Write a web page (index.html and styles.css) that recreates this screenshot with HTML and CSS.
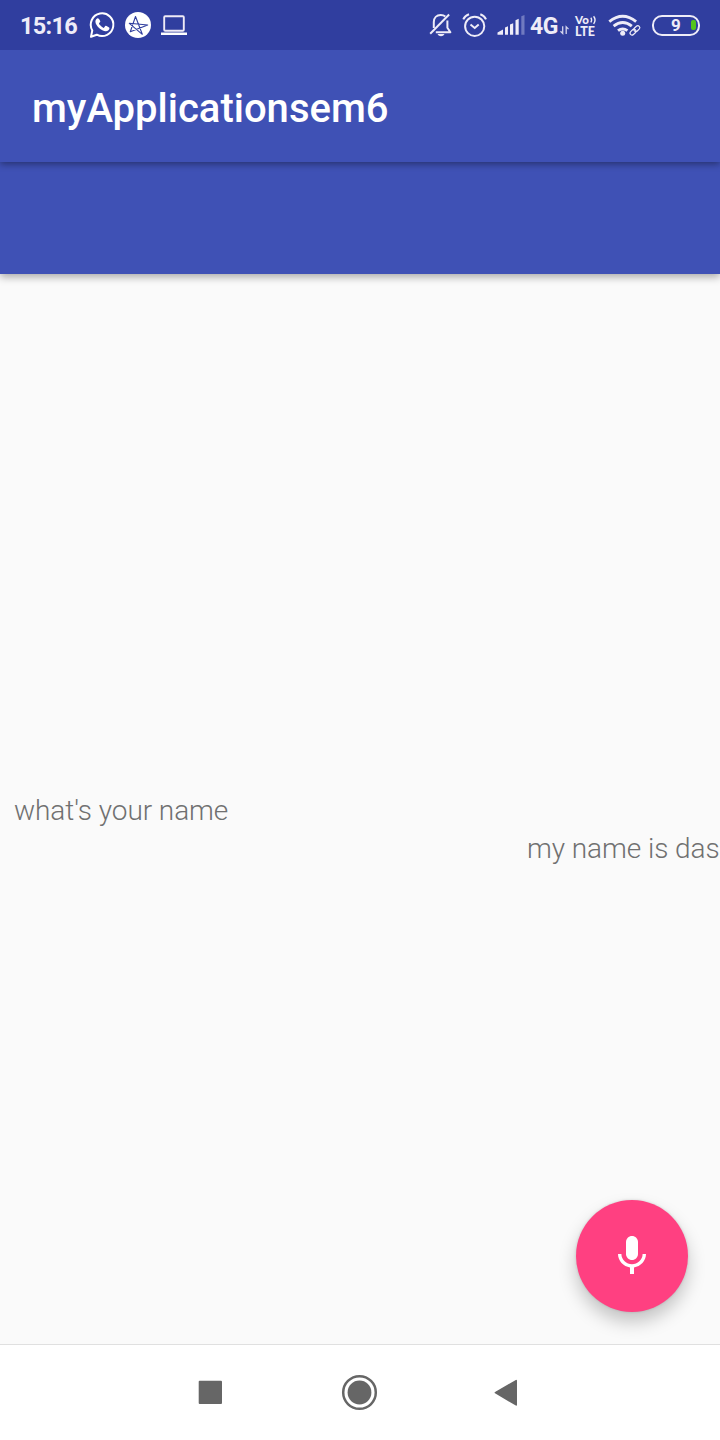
FILE: index.html
```html
<!DOCTYPE html>
<html lang="en">
<head>
<meta charset="utf-8">
<title>myApplicationsem6</title>
<link rel="stylesheet" href="styles.css">
</head>
<body>
<div class="screen">
  <header class="status">
    <div class="status-group">
      <span class="time">15:16</span>
      <svg class="icon" width="28" height="50" viewBox="88 0 28 50">
        <path d="M91 36.800l1.300-6.400a11.300 11.300 0 1 1 4.500 4.300z" fill="none" stroke="#fff" stroke-width="2" stroke-linejoin="round"/>
        <path d="M97.800 18.200c-.9 0-2.400 1.300-2.400 3.400 0 4.400 6.300 9.700 10.400 9.700 2.100 0 3.700-1.600 3.700-3.200 0-.5-3.300-2.300-3.800-2.300-.6 0-1.400 2.100-2 2.100-1 0-4.700-3.200-4.700-4.300 0-.5 1.300-1.400 1.300-2 0-.6-1.200-3.400-2.500-3.400z" fill="#fff"/>
      </svg>
      <svg class="icon" width="28" height="50" viewBox="124 0 28 50">
        <circle cx="138" cy="25" r="13" fill="#fff"/>
        <path d="M135.500 16.500L142.300 34.300 129.300 23.300 147.700 25 130.300 31.800z" fill="none" stroke="#303e9f" stroke-width="1.100" stroke-linejoin="round"/>
      </svg>
      <svg class="icon" width="28" height="50" viewBox="160 0 28 50">
        <rect x="164.200" y="16.200" width="19.600" height="14.600" rx="1" fill="none" stroke="#eeeaf6" stroke-width="1.900"/>
        <path d="M161 32.500h26v2.500h-26z" fill="#fff"/>
      </svg>
    </div>
    <div class="status-group">
      <svg class="icon" width="24" height="50" viewBox="429 0 24 50">
        <g fill="none" stroke="#eeecf8" stroke-width="2" stroke-linejoin="round">
          <path d="M433.800 28v-6c0-4.400 2.900-7 6.900-7 1.900 0 3.500.6 4.600 1.600M447.400 20.500v7.300l3 4.400h-14.600"/>
          <path d="M430.200 33.700l18.900-19.200"/>
        </g>
        <path d="M437.500 34h7c-.8 1.500-2 2.200-3.500 2.200s-2.700-.7-3.500-2.200z" fill="#eeecf8"/>
      </svg>
      <svg class="icon" width="25" height="50" viewBox="462 0 25 50">
        <g fill="none" stroke="#eeecf8" stroke-width="2">
          <circle cx="474.700" cy="26.300" r="9.600"/>
          <path d="M470.500 24.500l4.200 3.500 4-3.500M463.300 19.400c1-2.300 3-4.200 5.700-5.200M486 19.400c-1-2.300-3-4.200-5.700-5.200"/>
        </g>
      </svg>
      <svg class="icon" width="28" height="50" viewBox="497 0 28 50">
        <path d="M497.500 32.500l5.500-3v5.200h-5.500zM505 27.500l3-1.200v8.400h-3zM510 24.500l3.200-1.300v11.500h-3.200zM515.500 20.200l3.200-1.500v16h-3.200z" fill="#eeecf8"/>
        <path d="M521.300 16.300l3.200-1.300v19.700h-3.200z" fill="#707ac0"/>
      </svg>
      <span class="network">4G</span>
      <svg class="icon" width="11" height="50" viewBox="559 0 11 50">
        <path d="M562.700 26.300v7.200l-2.200-2.300M566.200 34v-7.200l2.300 2.300" fill="none" stroke="#d5d5ee" stroke-width="1.300"/>
      </svg>
      <span class="volte"><span class="volte-top">Vo<svg width="7" height="12" viewBox="0 0 7 12"><path d="M.8 3.800q1.600 2 0 4.600M3.600 2.300q2.900 3.700 0 7.600" fill="none" stroke="#eeecf8" stroke-width="1.400"/></svg></span><span class="volte-low">LTE</span></span>
      <svg class="icon" width="34" height="50" viewBox="608 0 34 50">
        <g fill="none" stroke="#eeecf8" stroke-width="2.900">
          <path d="M609.300 21.600q13.400-10.600 26.800 0M613.600 26.200q9.100-7.200 18.200 0M618 30.700q4.700-3.600 9.400 0"/>
        </g>
        <circle cx="622.700" cy="33.300" r="2.500" fill="#eeecf8"/>
        <g transform="rotate(-43 635 30.300)" fill="none">
          <rect x="629.200" y="28.400" width="11.500" height="3.800" rx="1.900" stroke="#303e9f" stroke-width="3"/>
          <g stroke="#eeecf8" stroke-width="1.200"><rect x="629" y="28.300" width="6.600" height="4" rx="2"/><rect x="634.200" y="28.300" width="6.600" height="4" rx="2"/></g>
        </g>
      </svg>
      <span class="battery"><span class="battery-text">9</span><span class="battery-level"></span></span>
    </div>
  </header>
  <div class="toolbar"><h1 class="title">myApplicationsem6</h1></div>
  <div class="subbar"></div>
  <main class="chat">
    <p class="msg msg-in">what's your name</p>
    <p class="msg msg-out">my name is das</p>
    <button class="fab" aria-label="Speak">
      <svg width="48" height="48" viewBox="0 0 24 24"><path d="M12 14c1.660 0 3-1.340 3-3V5c0-1.660-1.340-3-3-3S9 3.340 9 5v6c0 1.660 1.340 3 3 3z" fill="#fff"/><path d="M17.300 11c0 3-2.540 5.100-5.300 5.100S6.700 14 6.700 11H5c0 3.410 2.720 6.230 6 6.720V21h2v-3.280c3.280-.48 6-3.300 6-6.720h-1.700z" fill="#fff"/></svg>
    </button>
  </main>
  <nav class="nav">
    <svg width="720" height="95" viewBox="0 1345 720 95">
      <rect x="198.700" y="1380.700" width="23.300" height="23.300" rx="1" fill="#666"/>
      <circle cx="359.500" cy="1392.500" r="16.300" fill="none" stroke="#666" stroke-width="2.500"/>
      <circle cx="359.500" cy="1392.500" r="11.900" fill="#666"/>
      <path d="M495.400 1392.600L516.200 1380.700V1404.900z" fill="#666" stroke="#666" stroke-width="1.600" stroke-linejoin="round"/>
    </svg>
  </nav>
</div>
</body>
</html>
```

FILE: styles.css
```css
* { box-sizing: border-box; }
body { margin: 0; font-family: Roboto, "Noto Sans", sans-serif; }
.screen {
  width: 720px;
  height: 1440px;
  display: flex;
  flex-direction: column;
  overflow: hidden;
  background: #fafafa;
}
.status {
  height: 50px;
  flex: none;
  display: flex;
  justify-content: space-between;
  padding: 0 20px;
  background: #303e9f;
  color: #eeecf8;
}
.status-group { display: flex; align-items: center; }
.icon { display: block; flex: none; }
.time {
  width: 68px;
  font-size: 23.5px;
  line-height: 50px;
  font-weight: 700;
  letter-spacing: -0.7px;
  padding-top: 2px;
}
.time ~ .icon { margin-right: 8px; }
.status-group:last-child .icon:nth-child(1) { margin-right: 9px; }
.status-group:last-child .icon:nth-child(2) { margin-right: 10px; }
.status-group:last-child .icon:nth-child(3) { margin-right: 5px; }
.network {
  width: 29px;
  font-size: 23px;
  line-height: 50px;
  font-weight: 700;
  letter-spacing: -0.4px;
  padding-top: 3px;
  white-space: nowrap;
}
.volte {
  width: 24px;
  margin: 1px 9px 0 5px;
  display: flex;
  flex-direction: column;
  font-family: Lato, Roboto, sans-serif;
  font-weight: 900;
  white-space: nowrap;
}
.volte-top { display: flex; gap: 1px; font-size: 11.500px; line-height: 12px; }
.volte-low { font-size: 12.500px; line-height: 12px; letter-spacing: -0.1px; }
.battery {
  width: 48px;
  height: 21px;
  margin-left: 10px;
  border: 2px solid #eeecf8;
  border-radius: 10px;
  display: flex;
  align-items: center;
  justify-content: flex-end;
  padding-right: 2px;
}
.battery-text { width: 10px; margin-right: 10px; font-size: 17px; line-height: 17px; font-weight: 700; }
.battery-level { width: 5px; height: 10px; border-radius: 2px; background: #55c51b; }
.toolbar {
  height: 112px;
  flex: none;
  display: flex;
  align-items: center;
  padding: 6px 32px 0;
  background: #3f51b5;
  box-shadow: 0 2px 7px rgba(0, 0, 0, .4);
  z-index: 2;
}
.title { margin: 0; font-size: 40px; line-height: 48px; font-weight: 500; color: #fff; }
.subbar {
  height: 112px;
  flex: none;
  background: #3f51b5;
  box-shadow: 0 3px 8px rgba(0, 0, 0, .33);
  z-index: 1;
}
.chat {
  position: relative;
  flex: 1;
  padding-top: 518px;
}
.msg {
  margin: 0;
  font-size: 28px;
  line-height: 38px;
  font-weight: 300;
  letter-spacing: -0.07px;
  color: #707070;
  white-space: nowrap;
}
.msg-in { padding-left: 14px; }
.msg-out { padding-left: 527px; }
.fab {
  position: absolute;
  right: 32px;
  bottom: 32px;
  width: 112px;
  height: 112px;
  padding: 0;
  border: 0;
  border-radius: 50%;
  display: flex;
  align-items: center;
  justify-content: center;
  background: #ff4081;
  box-shadow: 0 10px 18px rgba(0, 0, 0, .22), 0 0 3px rgba(0, 0, 0, .15);
}
/* Keeps the toolbar shadow from falling on the status bar */
.status { position: relative; z-index: 3; }
.nav {
  height: 96px;
  flex: none;
  border-top: 1px solid #e0e0e0;
  background: #fff;
}
.nav svg { display: block; }
```
